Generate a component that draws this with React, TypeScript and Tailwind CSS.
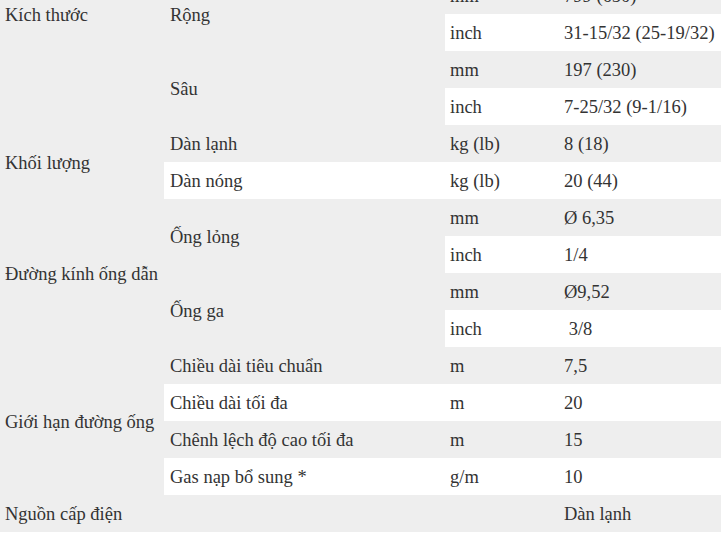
type Row = {
  group?: { label: string; span: number };
  item?: { label: string; span: number };
  unit: string;
  value: string;
};

const rows: Row[] = [
  { group: { label: 'Kích thước', span: 6 }, item: { label: 'Cao', span: 2 }, unit: 'mm', value: '292 (370)' },
  { unit: 'inch', value: '11-1/2 (14-9/16)' },
  { item: { label: 'Rộng', span: 2 }, unit: 'mm', value: '799 (650)' },
  { unit: 'inch', value: '31-15/32 (25-19/32)' },
  { item: { label: 'Sâu', span: 2 }, unit: 'mm', value: '197 (230)' },
  { unit: 'inch', value: '7-25/32 (9-1/16)' },
  { group: { label: 'Khối lượng', span: 2 }, item: { label: 'Dàn lạnh', span: 1 }, unit: 'kg (lb)', value: '8 (18)' },
  { item: { label: 'Dàn nóng', span: 1 }, unit: 'kg (lb)', value: '20 (44)' },
  { group: { label: 'Đường kính ống dẫn', span: 4 }, item: { label: 'Ống lỏng', span: 2 }, unit: 'mm', value: 'Ø 6,35' },
  { unit: 'inch', value: '1/4' },
  { item: { label: 'Ống ga', span: 2 }, unit: 'mm', value: 'Ø9,52' },
  { unit: 'inch', value: '\u00a03/8' },
  { group: { label: 'Giới hạn đường ống', span: 4 }, item: { label: 'Chiều dài tiêu chuẩn', span: 1 }, unit: 'm', value: '7,5' },
  { item: { label: 'Chiều dài tối đa', span: 1 }, unit: 'm', value: '20' },
  { item: { label: 'Chênh lệch độ cao tối đa', span: 1 }, unit: 'm', value: '15' },
  { item: { label: 'Gas nạp bổ sung *', span: 1 }, unit: 'g/m', value: '10' },
  { group: { label: 'Nguồn cấp điện', span: 1 }, item: { label: '', span: 1 }, unit: '', value: 'Dàn lạnh' },
];

export default function App() {
  return (
    <div className="w-[727px] h-[539px] overflow-hidden bg-white">
      <table
        className="-mt-[97px] w-[721px] border-collapse table-fixed text-[18.5px] text-[#333]"
        style={{ fontFamily: '"Liberation Serif", "Times New Roman", serif' }}
      >
        <colgroup>
          <col className="w-[164px]" />
          <col className="w-[281px]" />
          <col className="w-[113px]" />
          <col className="w-[163px]" />
        </colgroup>
        <tbody>
          {rows.map((row, i) => (
            <tr key={i} className={i % 2 === 1 ? 'bg-white' : 'bg-[#eeeeee]'}>
              {row.group && (
                <td rowSpan={row.group.span} className="bg-[#eeeeee] pl-[5px] pr-1 pt-[2px] align-middle leading-none whitespace-nowrap">
                  {row.group.label}
                </td>
              )}
              {row.item && (
                <td rowSpan={row.item.span} className="pl-[6px] pt-[2px] align-middle leading-none whitespace-nowrap">
                  {row.item.label}
                </td>
              )}
              <td className="h-[37px] pl-[5px] pt-[2px] align-middle leading-none">{row.unit}</td>
              <td className="pl-[6px] pt-[2px] align-middle leading-none whitespace-nowrap">{row.value}</td>
            </tr>
          ))}
        </tbody>
      </table>
    </div>
  );
}
